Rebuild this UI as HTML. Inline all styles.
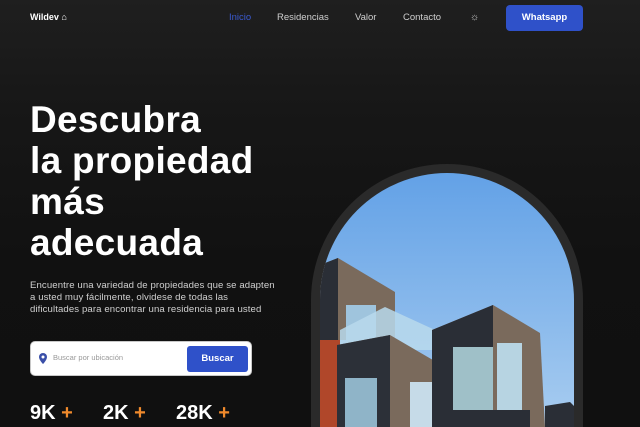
<!DOCTYPE html>
<html><head><meta charset="utf-8">
<style>
*{margin:0;padding:0;box-sizing:border-box}
body{width:640px;height:427px;overflow:hidden;background:linear-gradient(180deg,#1f1f1f 0%,#171717 25%,#111 60%,#101010 100%);font-family:"Liberation Sans",sans-serif;color:#fff;position:relative}
.logo{position:absolute;left:30px;top:12px;font-size:9px;font-weight:bold}
.nav a{position:absolute;top:12px;font-size:9.5px;color:#cfcfcf;text-decoration:none}
.wa{position:absolute;left:506px;top:5px;width:77px;height:26px;background:#2f51c9;border-radius:4px;font-size:9.5px;font-weight:bold;text-align:center;line-height:26px}
h1{position:absolute;left:30px;top:99px;font-size:37px;line-height:41px;font-weight:bold;letter-spacing:0.3px}
.p{position:absolute;left:30px;top:280px;font-size:9.6px;line-height:12px;color:#d0d0d0;white-space:nowrap;letter-spacing:0.1px}
.search{position:absolute;left:30px;top:341px;width:222px;height:35px;background:#fff;border-radius:5px;border:1.5px solid #c8c8c8}
.search span{position:absolute;left:22px;top:11px;font-size:7.5px;color:#999}
.btn{position:absolute;left:156px;top:4px;width:61px;height:26px;background:#2f51c9;border-radius:3px;color:#fff;font-size:9.5px;font-weight:bold;text-align:center;line-height:26px}
.st{position:absolute;top:402px;font-size:20px;font-weight:bold}
.st b{color:#f08a2c}
</style></head><body>
<div class="logo">Wildev &#8962;</div>
<div class="nav">
<a style="left:229px;color:#3b5ad0">Inicio</a>
<a style="left:277px">Residencias</a>
<a style="left:355px">Valor</a>
<a style="left:403px">Contacto</a>
<a style="left:470px;font-size:10px">☼</a>
</div>
<div class="wa">Whatsapp</div>
<h1>Descubra<br>la propiedad<br>más<br>adecuada</h1>
<div class="p">Encuentre una variedad de propiedades que se adapten<br>a usted muy fácilmente, olvidese de todas las<br>dificultades para encontrar una residencia para usted</div>
<div class="search">
<svg style="position:absolute;left:8px;top:11px" width="8" height="11" viewBox="0 0 8 11"><path d="M4 0a4 4 0 0 0-4 4c0 3 4 7 4 7s4-4 4-7a4 4 0 0 0-4-4z" fill="#3a4fa8"/><circle cx="4" cy="4" r="1.5" fill="#fff"/></svg>
<span>Buscar por ubicación</span>
<div class="btn">Buscar</div>
</div>
<div class="st" style="left:30px">9K <b>+</b></div>
<div class="st" style="left:103px">2K <b>+</b></div>
<div class="st" style="left:176px">28K <b>+</b></div>
<svg style="position:absolute;left:0;top:0" width="640" height="427">
<defs>
<linearGradient id="sky" x1="0" y1="0" x2="0" y2="1"><stop offset="0" stop-color="#5f9fe6"/><stop offset="1" stop-color="#a9cdf0"/></linearGradient>
<clipPath id="c"><path d="M320 427 V300 A127 127 0 0 1 574 300 V427 Z"/></clipPath>
</defs>
<path d="M311 427 V300 A136 136 0 0 1 583 300 V427 Z" fill="#2a2a2a"/>
<g clip-path="url(#c)">
<rect x="300" y="160" width="300" height="270" fill="url(#sky)"/>
<rect x="320" y="340" width="20" height="90" fill="#b0472a"/>
<polygon points="320,265 338,258 395,292 395,340 338,340 320,340" fill="#7a6a5c"/>
<polygon points="320,265 338,258 338,340 320,340" fill="#2a2e36"/>
<rect x="346" y="305" width="30" height="40" fill="#9fc4dd"/>
<polygon points="340,330 385,307 435,330 435,350 340,350" fill="#b9d9ec" opacity="0.85"/>
<polygon points="337,345 390,335 450,370 450,427 337,427" fill="#7a6a5c"/>
<polygon points="337,345 390,335 390,427 337,427" fill="#2c3038"/>
<rect x="345" y="378" width="32" height="49" fill="#8fb4c8"/>
<rect x="410" y="382" width="30" height="45" fill="#c6dbe8"/>
<rect x="440" y="405" width="12" height="22" fill="#b0472a"/>
<polygon points="432,330 493,305 540,333 545,427 432,427" fill="#7a6a5c"/>
<polygon points="432,330 493,305 493,427 432,427" fill="#2a2e36"/>
<rect x="453" y="347" width="40" height="65" fill="#9fc0c8"/>
<rect x="497" y="343" width="25" height="68" fill="#b7d4e2"/>
<rect x="448" y="410" width="82" height="17" fill="#2a2e36"/>
<polygon points="545,406 570,402 574,406 574,427 545,427" fill="#2a2e36"/>
</g>
</svg>
</body></html>
